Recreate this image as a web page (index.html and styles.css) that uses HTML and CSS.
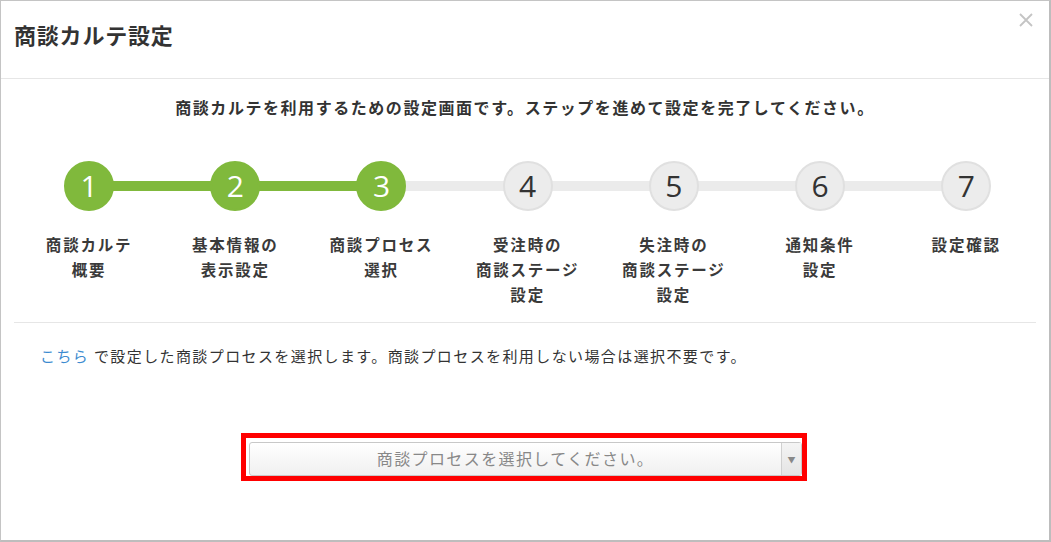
FILE: index.html
```html
<!DOCTYPE html>
<html lang="ja">
<head>
<meta charset="utf-8">
<title>商談カルテ設定</title>
<link rel="stylesheet" href="styles.css">
</head>
<body>
<div class="dialog">
  <div class="header">
    <h1 class="title">商談カルテ設定</h1>
    <button class="close" aria-label="閉じる">
      <svg width="16" height="16" viewBox="0 0 16 16"><path d="M2 2L14 14M14 2L2 14" stroke="#c4c4c4" stroke-width="1.8" fill="none"/></svg>
    </button>
  </div>
  <div class="body">
    <p class="intro">商談カルテを利用するための設定画面です。ステップを進めて設定を完了してください。</p>
    <div class="steps">
      <div class="step done first"><div class="track"><span class="circle">1</span></div><div class="label">商談カルテ<br>概要</div></div>
      <div class="step done"><div class="track"><span class="circle">2</span></div><div class="label">基本情報の<br>表示設定</div></div>
      <div class="step done current"><div class="track"><span class="circle">3</span></div><div class="label">商談プロセス<br>選択</div></div>
      <div class="step"><div class="track"><span class="circle">4</span></div><div class="label">受注時の<br>商談ステージ<br>設定</div></div>
      <div class="step"><div class="track"><span class="circle">5</span></div><div class="label">失注時の<br>商談ステージ<br>設定</div></div>
      <div class="step"><div class="track"><span class="circle">6</span></div><div class="label">通知条件<br>設定</div></div>
      <div class="step last"><div class="track"><span class="circle">7</span></div><div class="label">設定確認</div></div>
    </div>
    <p class="note"><a href="#" class="link">こちら</a> で設定した商談プロセスを選択します。商談プロセスを利用しない場合は選択不要です。</p>
    <div class="select-wrap">
      <div class="select">
        <span class="select-text">商談プロセスを選択してください。</span>
        <span class="select-arrow">▼</span>
      </div>
    </div>
  </div>
</div>
</body>
</html>
```

FILE: styles.css
```css
* { box-sizing: border-box; }
html, body { margin: 0; padding: 0; background: #fff; }
body {
  font-family: "Noto Sans CJK JP", "Noto Sans", sans-serif;
  color: #333;
}
.dialog {
  width: 1051px;
  height: 542px;
  border: 1px solid #c4c4c4;
  border-right-width: 2px;
  border-bottom-width: 2px;
  border-right-color: #bdbdbd;
  border-bottom-color: #bdbdbd;
  background: #fff;
  display: flex;
  flex-direction: column;
}
.header {
  height: 78px;
  border-bottom: 1px solid #e6e6e6;
  display: flex;
  align-items: flex-start;
  justify-content: space-between;
  padding: 0 13px 0 13px;
}
.title {
  margin: 18px 0 0 0;
  font-size: 22px;
  line-height: 30px;
  font-weight: 700;
  letter-spacing: 0.8px;
  color: #333;
}
.close {
  margin-top: 11px;
  margin-right: 2px;
  background: none;
  border: 0;
  padding: 0;
  width: 16px;
  height: 16px;
  cursor: pointer;
}
.close svg { display: block; }
.body {
  padding: 0 13px;
}
.intro {
  margin: 16px 0 0;
  text-align: center;
  font-size: 16px;
  line-height: 24px;
  font-weight: 700;
  letter-spacing: 1.55px;
  color: #333;
}
.steps {
  display: grid;
  grid-template-columns: repeat(7, 146.2px);
  margin: 42px 0 0 0;
  padding-left: 2px;
  padding-bottom: 15px;
  border-bottom: 1px solid #e6e6e6;
}
.step {
  display: flex;
  flex-direction: column;
  align-items: center;
}
.track {
  position: relative;
  width: 100%;
  height: 50px;
  display: flex;
  justify-content: center;
  align-items: center;
}
.track::before {
  content: "";
  position: absolute;
  left: 0;
  right: 0;
  top: 20px;
  height: 10px;
  background: #ebebeb;
}
.step.first .track::before { left: 50%; }
.step.last .track::before { right: 50%; }
.step.done .track::before { background: #80b93c; }
.step.current .track::before {
  background: linear-gradient(to right, #80b93c 50%, #ebebeb 50%);
}
.circle {
  position: relative;
  width: 50px;
  height: 50px;
  border-radius: 50%;
  background: #ececec;
  border: 2px solid #e0e0e0;
  display: flex;
  align-items: center;
  justify-content: center;
  font-size: 30px;
  font-family: "Open Sans", "Noto Sans", sans-serif;
  font-weight: 400;
  color: #333;
  line-height: 1;
}
.step.done .circle {
  background: #80b93c;
  border-color: #80b93c;
  color: #fff;
}
.label {
  margin-top: 21px;
  text-align: center;
  font-size: 15.5px;
  line-height: 25px;
  font-weight: 700;
  letter-spacing: 1.8px;
  color: #3a3a3a;
}
.note {
  margin: 21px 0 0 26px;
  font-size: 15px;
  line-height: 24px;
  letter-spacing: 1.4px;
  color: #333;
}
.link {
  color: #3d8bd0;
  text-decoration: none;
}
.select-wrap {
  width: 566px;
  height: 48px;
  margin: 65px 0 0 227px;
  border: 5px solid #ff0000;
  padding: 4px 0 0 3px;
}
.select {
  width: 100%;
  height: 100%;
  display: flex;
  border: 1px solid #c8c8c8;
  border-radius: 3px;
  background: linear-gradient(to bottom, #ffffff, #f0f0f0);
}
.select-text {
  flex: 1;
  text-align: center;
  font-size: 16px;
  line-height: 31px;
  letter-spacing: 1.4px;
  color: #888;
}
.select-arrow {
  width: 20px;
  border-left: 1px solid #d0d0d0;
  display: flex;
  align-items: center;
  justify-content: center;
  font-size: 8px;
  color: #888;
  background: linear-gradient(to bottom, #f4f4f4, #e4e4e4);
}
```
